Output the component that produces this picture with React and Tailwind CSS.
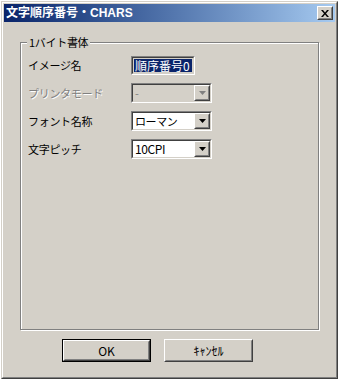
import React from 'react';

const raised =
  'border border-t-white border-l-white border-b-[#404040] border-r-[#404040]';
const raisedInner = 'border border-t-[#d4d0c8] border-l-[#d4d0c8] border-b-[#808080] border-r-[#808080]';
const sunken =
  'border border-t-[#808080] border-l-[#808080] border-b-white border-r-white';
const sunkenInner = 'border border-t-[#404040] border-l-[#404040] border-b-[#d4d0c8] border-r-[#d4d0c8]';

const Arrow = ({ disabled }) => (
  <svg width="7" height="4" viewBox="0 0 7 4">
    <path d="M0 0h7L3.5 4z" fill={disabled ? '#808080' : '#000'} />
  </svg>
);

const Select = ({ value, disabled, size = 'text-[11px]' }) => (
  <div className={`${sunken} w-[81px] h-[20px]`}>
    <div className={`${sunkenInner} flex h-full ${disabled ? 'bg-[#d4d0c8]' : 'bg-white'}`}>
      <div
        className={`flex-1 pl-[2px] ${size} tracking-[-0.4px] leading-[16px] ${
          disabled ? 'text-[#808080]' : 'text-black'
        }`}
      >
        {value}
      </div>
      <div className={`${raised} w-[16px] h-[16px] bg-[#d4d0c8]`}>
        <div className={`${raisedInner} h-full flex items-center justify-center`}>
          <Arrow disabled={disabled} />
        </div>
      </div>
    </div>
  </div>
);

const Row = ({ label, disabled, children }) => (
  <div className="flex items-center h-[20px]">
    <div
      className={`w-[103px] text-[11px] tracking-[-0.3px] leading-[14px] ${
        disabled ? 'text-[#808080] [text-shadow:1px_1px_0_#fff]' : 'text-black'
      }`}
    >
      {label}
    </div>
    {children}
  </div>
);

const Button = ({ label, primary }) => (
  <div className={primary ? 'border border-black' : ''}>
    <div
      className={`${raised} ${primary ? 'w-[87px] h-[21px]' : 'w-[89px] h-[23px]'} bg-[#d4d0c8]`}
    >
      <div className={`${raisedInner} h-full flex items-center justify-center text-[12px] text-black`}>
        {label}
      </div>
    </div>
  </div>
);

export default function App() {
  return (
    <div className="w-[340px] h-[381px] bg-white pl-[1px] pt-[1px] font-['Noto_Sans_CJK_JP',sans-serif]">
      <div className="w-[337px] h-[378px] border border-t-[#d4d0c8] border-l-[#d4d0c8] border-b-[#404040] border-r-[#404040]">
        <div className="h-full border border-t-white border-l-white border-b-[#808080] border-r-[#808080] bg-[#d4d0c8] p-[1px] flex flex-col">
          {/* title bar */}
          <div className="h-[18px] flex items-center bg-gradient-to-r from-[#0a246a] to-[#a6caf0] pl-[2px] pr-[2px]">
            <div className="flex-1 text-white font-bold text-[12px] leading-[14px] font-['Liberation_Sans','Noto_Sans_CJK_JP',sans-serif]">
              文字順序番号・CHARS
            </div>
            <div className={`${raised} w-[16px] h-[14px] bg-[#d4d0c8]`}>
              <div className={`${raisedInner} h-full flex items-center justify-center`}>
                <svg width="8" height="7" viewBox="0 0 8 7">
                  <path d="M0 0h2l2 2.5L6 0h2L5 3.5 8 7H6L4 4.5 2 7H0l3-3.5z" fill="#000" />
                </svg>
              </div>
            </div>
          </div>

          {/* group box */}
          <div className="relative mt-[20px] ml-[16px] w-[299px] h-[288px] border border-[#808080] shadow-[inset_1px_1px_0_#fff,1px_1px_0_#fff]">
            <div className="absolute left-[6px] top-[-8px] px-[2px] bg-[#d4d0c8] text-[11px] tracking-[-0.3px] leading-[14px] text-black">
              1バイト書体
            </div>
            <div className="pt-[12px] pl-[7px] flex flex-col gap-[8px]">
              <Row label="イメージ名">
                <div className={`${sunken} w-[64px] h-[19px]`}>
                  <div className={`${sunkenInner} h-full bg-[#d4d0c8] px-[1px] py-[1px]`}>
                    <div className="h-full bg-[#0a246a] text-white text-[12px] leading-[13px] pl-[1px]">
                      順序番号0
                    </div>
                  </div>
                </div>
              </Row>
              <Row label="プリンタモード" disabled>
                <Select value="-" disabled />
              </Row>
              <Row label="フォント名称">
                <Select value="ローマン" />
              </Row>
              <Row label="文字ピッチ">
                <Select value="10CPI" size="text-[12px]" />
              </Row>
            </div>
          </div>

          {/* buttons */}
          <div className="flex mt-[9px] ml-[58px] gap-[13px]">
            <Button label="OK" primary />
            <Button label="ｷｬﾝｾﾙ" />
          </div>
        </div>
      </div>
    </div>
  );
}
